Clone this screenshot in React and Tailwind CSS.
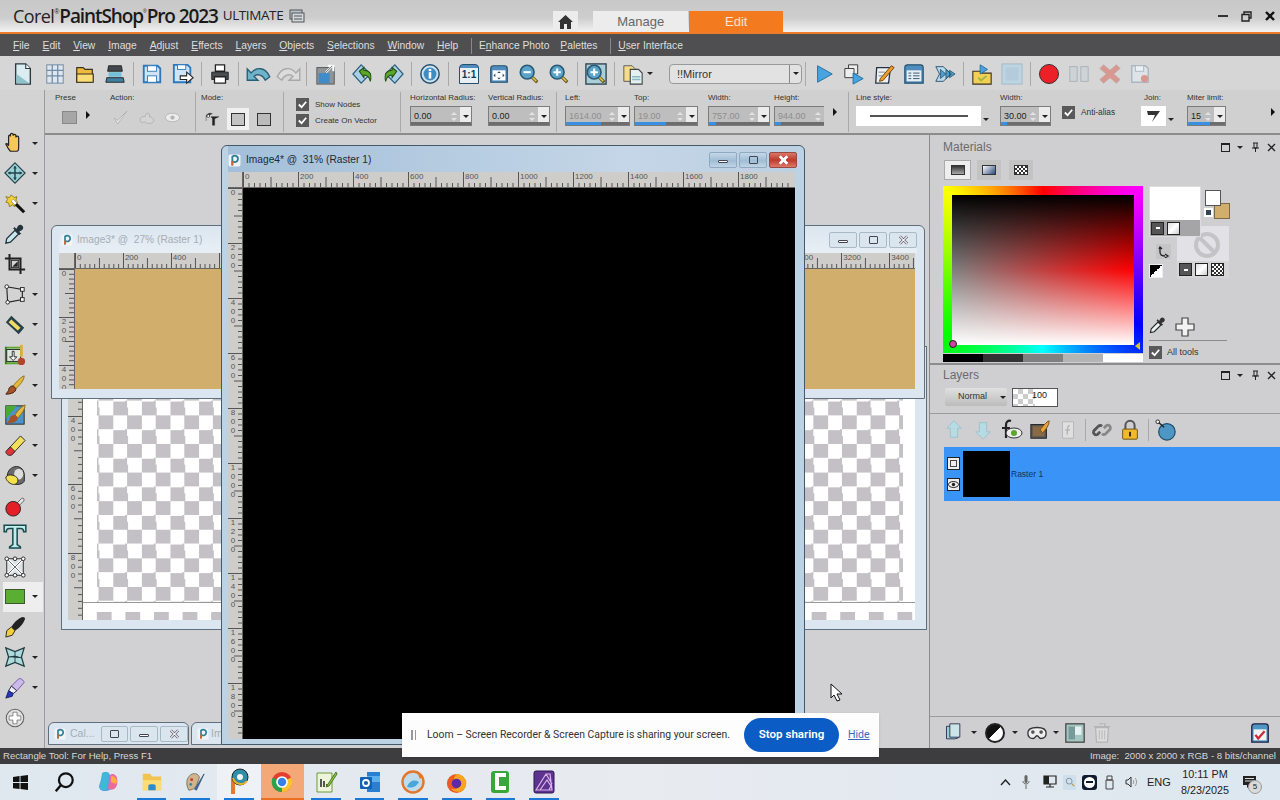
import React from "react";

const S = ({ s = 22, children, className = "" }) => (
  <svg width={s} height={s} viewBox="0 0 24 24" className={"shrink-0 " + className}>
    {children}
  </svg>
);

const Caret = ({ className = "" }) => (
  <span className={"inline-block w-0 h-0 border-x-[3px] border-x-transparent border-t-[3px] border-t-[#222] " + className} />
);
const ArrowR = ({ className = "" }) => (
  <span className={"inline-block w-0 h-0 border-y-[4px] border-y-transparent border-l-[4px] border-l-[#111] " + className} />
);

// top toolbar icons
const NewDoc = () => <S><path d="M4 1h11l5 5v17H4z" fill="#dcedf1" stroke="#2a3a40" strokeWidth="1.5" /><path d="M5 22V12l14 10z" fill="#8fc3cc" /><path d="M15 1v5h5" fill="#fff" stroke="#2a3a40" strokeWidth="1.2" /></S>;
const GridIco = () => <S><rect x="3" y="2" width="18" height="20" fill="#dfe6ee" stroke="#7d95ab" strokeWidth="1.2" /><path d="M9 2v20M15 2v20M3 8h18M3 14h18" stroke="#6f8ca8" strokeWidth="1.4" /></S>;
const FolderIco = () => <S><path d="M3 5h7l2 2h8v14H3z" fill="#f1b93e" stroke="#3a3220" strokeWidth="1.3" /><path d="M3 12h18v9H3z" fill="#fbdc77" stroke="#3a3220" strokeWidth="1.3" /></S>;
const ScanIco = () => <S><path d="M5 3h14l1 6H4z" fill="#40484e" stroke="#222" /><rect x="5" y="10" width="14" height="5" fill="#73c0d8" /><path d="M3 16h18l1 5H2z" fill="#3f7fa0" stroke="#222" /></S>;
const SaveIco = () => <S><path d="M3 3h15l3 3v15H3z" fill="#cfe4f5" stroke="#2d78bd" strokeWidth="2" /><rect x="7" y="3" width="10" height="6" fill="#fff" stroke="#2d78bd" /><rect x="7" y="14" width="10" height="7" fill="#fff" stroke="#2d78bd" /></S>;
const SaveAsIco = () => <S><path d="M2 2h15l3 3v16H2z" fill="#cfe4f5" stroke="#2d78bd" strokeWidth="2" /><rect x="6" y="2" width="9" height="5" fill="#fff" stroke="#2d78bd" /><path d="M9 14h7v-4l7 6-7 6v-4H9z" fill="#fff" stroke="#222" strokeWidth="1.2" /></S>;
const PrintIco = () => <S><path d="M7 2h10v7H7z" fill="#fff" stroke="#222" strokeWidth="1.4" /><path d="M3 10h18v8H3z" fill="#4a4d50" stroke="#222" /><path d="M6 15h12v7H6z" fill="#fff" stroke="#222" strokeWidth="1.4" /></S>;
const UndoIco = ({ off }) => (
  <S s={27}><g transform={off ? "matrix(-1 0 0 1 24 0)" : ""}><path d="M2 18V8l3.500 3.500C10 6 18 6 22 15l-4 3c-2-5-7-6-10-3.500l3.500 3.500z" fill={off ? "#dcdcdc" : "#6fb3c9"} stroke={off ? "#a8a8a8" : "#2a6077"} strokeWidth="1.2" /></g></S>
);
const ResizeIco = () => <S><rect x="2" y="5" width="19" height="18" fill="#8f9497" stroke="#555" /><rect x="4" y="11" width="12" height="11" fill="#3f8cc8" /><path d="M12 10l7-7M14 3h6v6" stroke="#fff" strokeWidth="2.2" fill="none" /><path d="M12 10l7-7" stroke="#333" strokeWidth=".8" /></S>;
const HistIco = ({ flip }) => (
  <S><g transform={flip ? "matrix(-1 0 0 1 24 0)" : ""}><path d="M10 2l10 10-10 10L1 12z" fill="#a9cfe6" stroke="#2b5d7c" strokeWidth="1.3" /><path d="M8 9l5-4v3c6 0 9 4 7 12-1-5-3-7-7-7v3z" fill="#5aa72c" stroke="#234d10" strokeWidth="1.1" /></g></S>
);
const InfoIco = () => <S><circle cx="12" cy="12" r="10" fill="#cde3f2" stroke="#24506e" strokeWidth="1.6" /><circle cx="12" cy="12" r="7" fill="#3e8cc2" /><rect x="10.6" y="10" width="2.8" height="7" fill="#fff" /><rect x="10.6" y="6.5" width="2.8" height="2.4" fill="#fff" /></S>;
const OneOne = () => <div className="flex h-[20px] w-[20px] flex-col rounded-t-[4px] border-[1.5px] border-[#24506e] bg-[#4e8dbd] pt-[3px]"><span className="flex-1 bg-[#e8f0f5] text-center text-[10px] leading-[14px] font-bold text-[#123a55]">1:1</span></div>;
const FitIco = () => <S><path d="M3 6q0-3 3-3h12q3 0 3 3v15H3z" fill="#4e8dbd" stroke="#24506e" strokeWidth="1.3" /><rect x="5" y="8" width="14" height="11" fill="#fff" /><path d="M12 9l2 2h-4zM12 18l2-2h-4zM6 13.500l2-2v4zM18 13.500l-2-2v4z" fill="#24506e" /></S>;
const ZoomIco = ({ plus, frame }) => (
  <S>
    {frame && <rect x="1" y="1" width="22" height="22" fill="#a9cfd9" stroke="#31444f" strokeWidth="1.5" />}
    <path d="M14 14l7 7" stroke="#6b5a1a" strokeWidth="3.5" /><path d="M15 15l5 5" stroke="#e5c852" strokeWidth="1.6" />
    <circle cx="10" cy="10" r="7.5" fill="#5ba3c9" stroke="#2a5a75" strokeWidth="1.8" />
    <path d={plus ? "M6 10h8M10 6v8" : "M6 10h8"} stroke="#fff" strokeWidth="2.2" />
  </S>
);
const DocsIco = () => <S><path d="M2 3h9l3 3v14H2z" fill="#f3dc8a" stroke="#555" /><path d="M9 7h9l4 4v12H9z" fill="#e4f0f2" stroke="#444" strokeWidth="1.2" /><path d="M11 15h9M11 18h9" stroke="#89b9c4" strokeWidth="1.4" /></S>;
const PlayIco = () => <S><path d="M5 3l16 9-16 9z" fill="#4aa3de" stroke="#1f6da3" /></S>;
const ScriptsIco = () => <S><path d="M6 2h10v10H6z" fill="#eee" stroke="#333" /><path d="M2 6h10v10H2z" fill="#eee" stroke="#333" /><path d="M11 11l11 6-11 6z" fill="#4aa3de" stroke="#1f6da3" /></S>;
const EditScript = () => <S><path d="M4 5h15l-2 17H3z" fill="#eef1ef" stroke="#234" strokeWidth="1.4" /><path d="M8 17L20 3l3 2-12 14-4 1z" fill="#ef9d2f" stroke="#6a3d0a" /><path d="M6 10h7M6 14h5" stroke="#789" /></S>;
const FormIco = () => <S><path d="M2 5q0-3 3-3h14q3 0 3 3v17H2z" fill="#4e8dbd" stroke="#24506e" strokeWidth="1.3" /><rect x="4" y="8" width="16" height="12" fill="#e8eef2" /><path d="M6 11h3M11 11h7M6 14h3M11 14h7M6 17h3M11 17h7" stroke="#24506e" /></S>;
const BatchIco = () => <S><path d="M2 4h8l9 8-9 8H2l4-8z" fill="#bcdcee" stroke="#25506c" /><path d="M7 7l6 5-6 5zM13 7l6 5-6 5zM17 8l6 4-6 4z" fill="#4e9acb" stroke="#1d4a66" strokeWidth=".8" /></S>;
const FolderRun = () => <S><path d="M2 9h8l2 2h10v12H2z" fill="#f4cf57" stroke="#3a3220" strokeWidth="1.2" /><path d="M10 2l8 5-8 5z" fill="#4aa3de" stroke="#1f6da3" /><path d="M8 16l3 3 6-5" stroke="#9eb83b" strokeWidth="2" fill="none" /></S>;
const FadedSq = () => <S><rect x="1" y="1" width="22" height="22" fill="#bdd4e2" stroke="#a5b8c4" /><rect x="5" y="5" width="14" height="14" fill="#b4cbdb" /></S>;
const RecIco = () => <span className="h-[20px] w-[20px] rounded-full border border-[#333] bg-[#ec2027]" />;
const PauseIco = () => <S><rect x="2" y="4" width="8" height="16" fill="#cdd3d6" stroke="#a8b0b5" /><rect x="14" y="4" width="8" height="16" fill="#cdd3d6" stroke="#a8b0b5" /></S>;
const XIco = () => <S><path d="M5 2l7 6 7-6 4 4-7 6 7 6-4 4-7-6-7 6-4-4 7-6-7-6z" fill="#d89890" stroke="#c2a8a6" /></S>;
const SaveOff = () => <S><path d="M3 3h15l3 3v15H3z" fill="#dde3e7" stroke="#a9b6c0" strokeWidth="1.5" /><rect x="7" y="3" width="9" height="6" fill="#eef1f3" stroke="#a9b6c0" /><circle cx="17" cy="17" r="4" fill="#d89890" /></S>;

// toolbox icons
const tools = [
  [<S><path d="M7 21c-3-3-4-6-5-8 1-1 2 0 3 2V5c0-2 2-2 2 0V3c0-2 3-2 3 0v1c0-2 3-2 3 0v2c0-2 3-2 3 0v10c0 3-1 5-2 5z" fill="#f6c75b" stroke="#222" strokeWidth="1.3" /></S>, true],
  [<S><path d="M12 1l11 11-11 11L1 12z" fill="#9dd0d3" stroke="#23444e" strokeWidth="1.3" /><path d="M12 5v14M5 12h14" stroke="#23444e" strokeWidth="1.6" /><path d="M12 4l2 3h-4zM12 20l2-3h-4zM4 12l3-2v4zM20 12l-3-2v4z" fill="#23444e" /></S>, true],
  [<S><path d="M2 4l4 1 2-3 3 3 3-1-1 4 2 2-3 2v3l-3-2-3 2-1-4-3-1 2-3z" fill="#f0cf3a" stroke="#8e7b1a" /><path d="M9 8l13 13" stroke="#111" strokeWidth="3.4" /><path d="M9 8l4 4" stroke="#fff" strokeWidth="3" /></S>, true],
  [<S><path d="M2 22l1-5 9-9 4 4-9 9z" fill="#c9e6ee" stroke="#22333c" strokeWidth="1.4" /><path d="M12 4c0 2 1 2 2 2 1-4 4-5 6-3s1 5-3 6c0 1 0 2 2 2l-2 2-7-7z" fill="#24323b" /></S>],
  [<S><path d="M6 1v17h17M1 6h17v17" fill="none" stroke="#222" strokeWidth="2.2" /><path d="M9 15l6-6v6z" fill="#222" /><rect x="8" y="8" width="8" height="8" fill="none" stroke="#222" /></S>],
  [<S><path d="M3 4l17 3v11L4 21z" fill="none" stroke="#222" strokeWidth="1.2" /><g fill="#fff" stroke="#222"><rect x="1" y="2" width="4" height="4" rx="2" /><rect x="18" y="5" width="4" height="4" /><rect x="18" y="16" width="4" height="4" /><rect x="2" y="19" width="4" height="4" rx="2" /></g></S>, true],
  [<S><path d="M8 2l14 13-6 7L2 9z" fill="#27404c" /><path d="M8 6l10 9-3 3L5 9z" fill="#f0dc63" /></S>, true],
  [<S><path d="M2 3h16v2H2zM2 20h16v2H2z" fill="#58a62e" /><path d="M2 3v19" stroke="#3a7d1a" strokeWidth="2" /><rect x="3" y="6" width="15" height="13" fill="#dce8df" stroke="#222" /><path d="M11 8v6h3l-4 4-4-4h3V8z" fill="#fff" stroke="#222" /><path d="M19 1v13" stroke="#d9b13a" strokeWidth="3" /><circle cx="19" cy="19" r="4" fill="#b0452a" /></S>, true],
  [<S><path d="M22 2c-3 1-8 6-12 11l3 3c4-4 9-9 9-14z" fill="#e6ba3a" stroke="#8e6a12" /><path d="M10 13c-4 0-5 3-5 5l-3 4c6 0 11-2 11-6z" fill="#a4532a" stroke="#3e1f0c" /></S>, true],
  [<S><rect x="2" y="2" width="20" height="20" fill="#4a93c9" stroke="#222" /><path d="M2 2h12L2 16z" fill="#49a935" /><path d="M23 1c-3 1-8 6-11 11l3 3c4-4 8-9 8-14z" fill="#e6ba3a" stroke="#8e6a12" /><path d="M12 12c-4 0-6 2-6 5l-3 4c6 0 12-1 12-6z" fill="#a4532a" /></S>, true],
  [<S><path d="M18 1l5 5L9 21l-5-5z" fill="#f3df5a" stroke="#222" /><path d="M7 13l5 5-4 4c-3 1-6-1-6-4z" fill="#e0343c" stroke="#222" /></S>, true],
  [<S><path d="M4 14C2 6 10 0 16 2c6 2 7 8 6 16-3 4-12 6-18-4z" fill="#6a6a6a" stroke="#222" /><ellipse cx="16" cy="10" rx="5" ry="6" fill="#ddd" /><path d="M2 13c3-4 11-2 13 2 1 4-2 7-6 6-3-1-7-4-7-8z" fill="#f3e04a" stroke="#222" /></S>, true],
  [<S><path d="M12 11l7-7c2-2 4 1 2 3l-7 7z" fill="#e5e5e5" stroke="#555" /><circle cx="10" cy="15" r="8" fill="#e32027" stroke="#222" /></S>],
  [<S s={26}><path d="M2 2h20v6h-2c0-2-1-3-3-3h-3v15l3 2v1H7v-1l3-2V5H7C5 5 4 6 4 8H2z" fill="#bfeee8" stroke="#174b50" strokeWidth="1.4" /></S>],
  [<S><rect x="3" y="3" width="18" height="18" fill="#dde3e3" stroke="#222" /><path d="M3 3l18 18M21 3L3 21" stroke="#fff" strokeWidth="3" /><path d="M3 3l18 18M21 3L3 21" stroke="#333" strokeWidth=".8" fill="none" /><g fill="#fff" stroke="#222"><circle cx="3" cy="3" r="2" /><circle cx="21" cy="3" r="2" /><circle cx="3" cy="21" r="2" /><circle cx="21" cy="21" r="2" /><circle cx="12" cy="3" r="2" /><circle cx="12" cy="21" r="2" /></g></S>],
  [<span className="h-[15px] w-[20px] border border-[#3a5a2a] bg-[#5aaf32]" />, true, false, true],
  [<S><path d="M20 1c2 0 3 1 3 2-2 6-7 11-11 13l-4-4C10 8 15 3 20 1z" fill="#222" /><path d="M8 12l4 4-3 5-7 2 1-7z" fill="#f0cf3a" stroke="#222" /></S>],
  [<S><path d="M2 2l10 4 10-4-3 10 3 10-10-4-10 4 3-10z" fill="#aedadc" stroke="#1e3e44" strokeWidth="1.4" /><path d="M12 6v12M5 12l7-1 7 2" stroke="#1e3e44" /></S>, true],
  [<S><path d="M16 2c2-1 5 1 6 4l-8 9-6-5z" fill="#cbb9ea" stroke="#6b57a0" /><path d="M8 10l6 5-4 3-5-3z" fill="#f0f0ff" stroke="#223" /><path d="M5 15l5 3-1 3-7 2z" fill="#2a37b6" stroke="#16206e" /></S>, true],
  [<S s={20}><circle cx="12" cy="12" r="10.500" fill="#e3e3e3" stroke="#666" strokeWidth="1.3" /><path d="M12 5v14M5 12h14" stroke="#fff" strokeWidth="4" /><path d="M9.500 5h5v4.500H19v5h-4.500V19h-5v-4.500H5v-5h4.500z" fill="none" stroke="#777" /></S>],
];

const Sep = ({ className = "h-[24px] mx-[3px]" }) => <span className={"w-px shrink-0 bg-[#a9a9a9] " + className} />;
const Tb = ({ children }) => <div className="flex h-[30px] w-[30px] shrink-0 items-center justify-center">{children}</div>;
const Lb = ({ children }) => <div className="flex h-[30px] w-[28.5px] shrink-0 items-center justify-center">{children}</div>;

const menu = ["File", "Edit", "View", "Image", "Adjust", "Effects", "Layers", "Objects", "Selections", "Window", "Help"];

const Spin = ({ v, w, dim, bar = 0, cut }) => (
  <div className={"relative flex h-[20px] border border-[#7c7c7c] bg-[#bebebe] " + w + (cut ? " border-r-0" : "")}>
    <span className={"flex-1 pl-[3px] pt-[3px] text-[9px] leading-[12px] " + (dim ? "text-[#8e8e8e]" : "text-[#222]")}>{v}</span>
    <span className="flex w-[12px] flex-col items-center justify-center gap-[3px]">
      <span className="h-0 w-0 border-x-[3px] border-b-[3px] border-x-transparent border-b-[#e3e3e3]" />
      <span className="h-0 w-0 border-x-[3px] border-t-[3px] border-x-transparent border-t-[#e3e3e3]" />
    </span>
    {!cut && (
      <span className="flex w-[11px] items-center justify-center bg-[#ececec]">
        <Caret />
      </span>
    )}
    <span className="absolute bottom-0 left-0 right-0 h-[3px] bg-[#6d6d6d]">
      <span className="block h-full bg-[#3a90e0]" style={{ width: bar + "%" }} />
    </span>
  </div>
);

const Field = ({ label, ml, children }) => (
  <div className={"flex shrink-0 flex-col " + ml}>
    <span className="h-[16px] text-[8px] leading-[16px] text-[#333]">{label}</span>
    {children}
  </div>
);

const Check = ({ className = "" }) => (
  <span className={"flex h-[13px] w-[13px] shrink-0 items-center justify-center bg-[#595959] " + className}>
    <svg width="11" height="11" viewBox="0 0 12 12"><path d="M2 6l3 3 5-6" fill="none" stroke="#fff" strokeWidth="2" /></svg>
  </span>
);

const HRuler = ({ labels, cell, w }) => (
  <div className={"flex h-[16px] shrink-0 overflow-hidden border-b border-[#666] bg-[#cfcdca] " + w}>
    {labels.map((l) => (
      <div key={l} className="relative h-full shrink-0" style={{ width: cell }}>
        <span className="absolute left-[2px] top-0 text-[8px] leading-[10px] text-[#555]">{l}</span>
        <svg width={cell} height="15" className="absolute left-0 top-0">
          {Array.from({ length: 10 }).map((_, i) => (
            <line key={i} x1={(i * cell) / 10 + 0.5} x2={(i * cell) / 10 + 0.5} y1={i === 0 ? 0 : i === 5 ? 5 : 11} y2="15" stroke="#555" />
          ))}
        </svg>
      </div>
    ))}
  </div>
);

const VRuler = ({ labels, cell, w = "w-[15px]" }) => (
  <div className={"flex shrink-0 flex-col overflow-hidden border-r border-[#666] bg-[#cfcdca] " + w}>
    {labels.map((l) => (
      <div key={l} className="relative w-full shrink-0" style={{ height: cell }}>
        <span className="absolute left-[2px] top-0 flex w-[6px] flex-col text-center text-[8px] leading-[9px] text-[#555]">
          {String(l).split("").map((d, i) => <span key={i}>{d}</span>)}
        </span>
        <svg width="15" height={cell} className="absolute left-0 top-0">
          {Array.from({ length: 10 }).map((_, i) => (
            <line key={i} y1={(i * cell) / 10 + 0.5} y2={(i * cell) / 10 + 0.5} x1={i === 0 ? 0 : i === 5 ? 6 : 10} x2="15" stroke="#555" />
          ))}
        </svg>
      </div>
    ))}
  </div>
);

const PspLogo = ({ s = 13 }) => (
  <S s={s}><rect x="1" y="1" width="22" height="22" rx="3" fill="#f1f4f6" /><path d="M8 21V5c5-4 12-1 10 6-1 4-6 5-9 3" fill="none" stroke="#2f7f96" strokeWidth="3.4" /><path d="M8 21v-8" stroke="#d8642a" strokeWidth="3.4" /></S>
);

const WinBtn = ({ kind, active, red }) => (
  <span className={"flex h-[16px] w-[28px] items-center justify-center rounded-[2px] border " + (red ? "border-[#9a4a40] bg-[linear-gradient(#d8776a,#c0392b_50%,#dc7a6c)]" : active ? "border-[#8fa9c0] bg-[linear-gradient(#c5d8e8,#9fbdd5_55%,#c0d5e5)]" : "border-[#aab9c6] bg-[#dbe5ee]")}>
    {kind === "min" && <span className="mt-[3px] h-[3px] w-[10px] rounded-[1px] border border-[#445] bg-white" />}
    {kind === "max" && <span className="h-[8px] w-[9px] rounded-[1px] border-[1.5px] border-[#445]" />}
    {kind === "x" && (
      <svg width="11" height="10" viewBox="0 0 12 10"><path d="M2 1l8 8M10 1L2 9" stroke={red ? "#fff" : "#556"} strokeWidth="2.6" /><path d="M2 1l8 8M10 1L2 9" stroke="#fff" strokeWidth={red ? 2.6 : 1.2} /></svg>
    )}
  </span>
);

const PanelHead = ({ title }) => (
  <div className="flex h-[20px] items-center pl-[13px] pr-[4px]">
    <span className="flex-1 text-[12px] text-[#6b6b6b]">{title}</span>
    <span className="mr-[7px] h-[9px] w-[9px] border border-t-2 border-[#222]" />
    <Caret className="mr-[8px]" />
    <svg width="9" height="10" viewBox="0 0 9 10" className="mr-[7px]"><path d="M2 1h5M3 1v5h3V1M1 6h7M4.500 6v4" stroke="#222" fill="none" /></svg>
    <svg width="9" height="9" viewBox="0 0 9 9"><path d="M1 1l7 7M8 1L1 8" stroke="#222" strokeWidth="1.3" /></svg>
  </div>
);

const swatchTool = "flex h-[13px] w-[13px] items-center justify-center border border-[#222]";

export default function App() {
  return (
    <div className="relative flex h-[800px] w-[1280px] flex-col overflow-hidden bg-[#cfcfd1] font-['Liberation_Sans',Arial,sans-serif]">
      {/* title bar */}
      <div className="flex h-[32px] items-center bg-[linear-gradient(#c8c8c8,#cdcdcd_55%,#f2f2f2)] pl-[13px]">
        <span className="font-['Open_Sans',sans-serif] text-[18px] leading-none tracking-[-0.6px] text-[#222]">Corel</span>
        <span className="-mt-[8px] text-[7px] text-[#222]">®</span>
        <span className="font-['Open_Sans',sans-serif] text-[19px] font-semibold leading-none tracking-[-1.1px] text-[#1a1a1a]">PaintShop</span>
        <span className="-mt-[9px] text-[5px] text-[#222]">®</span>
        <span className="font-['Open_Sans',sans-serif] text-[19px] font-semibold leading-none tracking-[-1.1px] text-[#1a1a1a]">Pro 2023</span>
        <span className="ml-[5px] font-['Open_Sans',sans-serif] text-[13.5px] leading-none tracking-[-0.4px] text-[#222]">ULTIMATE</span>
        <svg width="16" height="14" viewBox="0 0 16 14" className="ml-[6px]"><rect x="1" y="1" width="12" height="9" fill="#b5c2c8" stroke="#555" /><rect x="3" y="4" width="12" height="9" fill="#cfd8dc" stroke="#555" /><path d="M5 7h8M5 10h8" stroke="#555" /></svg>
        <div className="ml-[248px] flex h-full items-end">
          <span className="flex h-[21px] w-[25px] items-center justify-center bg-[#ececec]">
            <svg width="15" height="14" viewBox="0 0 15 14"><path d="M7.500 0L15 7h-2v7H9V9H6v5H2V7H0z" fill="#333" /></svg>
          </span>
          <span className="ml-[15px] flex h-[21px] w-[95px] items-center justify-center bg-[#ececec] text-[13px] text-[#666]">Manage</span>
          <span className="ml-[1px] flex h-[21px] w-[94px] items-center justify-center bg-[#f47a20] text-[13px] text-[#f8e3d2]">Edit</span>
        </div>
        <div className="ml-auto flex items-center gap-[13px] pr-[5px]">
          <span className="h-[2px] w-[10px] bg-[#333]" />
          <svg width="11" height="11" viewBox="0 0 11 11"><path d="M3 3V1h7v6H8M1 3.500h7v6.500H1z" fill="none" stroke="#222" strokeWidth="1.4" /></svg>
          <svg width="10" height="10" viewBox="0 0 10 10"><path d="M1 1l8 8M9 1L1 9" stroke="#111" strokeWidth="2.4" /></svg>
        </div>
      </div>
      <div className="h-[2px] bg-[#ee7a2b]" />

      {/* menu bar */}
      <div className="flex h-[22px] items-center gap-[12.9px] bg-[#4f4f51] pl-[13px] pt-[1px] text-[10.3px] text-[#dedede]">
        {menu.map((m) => (
          <span key={m}><span className="underline">{m[0]}</span>{m.slice(1)}</span>
        ))}
        <span className="-mr-[6px] h-[16px] w-px bg-[#8a8a8a]" />
        <span className="-mr-[2px]">E<span className="underline">n</span>hance Photo</span>
        <span><span className="underline">P</span>alettes</span>
        <span className="-mr-[6px] h-[16px] w-px bg-[#8a8a8a]" />
        <span><span className="underline">U</span>ser Interface</span>
      </div>

      {/* main toolbar */}
      <div className="flex h-[34px] items-center bg-[#d6d6d6] pl-[8px] pt-[1px]">
        <Tb><NewDoc /></Tb><div className="w-[2px]" /><Tb><GridIco /></Tb><Tb><FolderIco /></Tb><Tb><ScanIco /></Tb>
        <Sep /><Tb><SaveIco /></Tb><div className="w-px" /><Tb><SaveAsIco /></Tb>
        <Sep /><Tb><PrintIco /></Tb>
        <Sep /><div className="w-px" /><Tb><UndoIco /></Tb><Tb><UndoIco off /></Tb>
        <Sep /><div className="w-px" /><Tb><ResizeIco /></Tb>
        <Sep /><Tb><HistIco /></Tb><Tb><HistIco flip /></Tb>
        <Sep /><Tb><InfoIco /></Tb>
        <Sep /><div className="w-[2px]" /><Tb><OneOne /></Tb><Tb><FitIco /></Tb><Tb><ZoomIco /></Tb><Tb><ZoomIco plus /></Tb>
        <Sep /><Tb><ZoomIco plus frame /></Tb>
        <Sep /><Tb><DocsIco /></Tb>
        <Caret className="-ml-[1px] mr-[16px]" />
        <div className="flex h-[20px] w-[133px] rounded-[4px] border border-[#999] bg-[#e2e2e2]">
          <span className="flex-1 pl-[7px] text-[11px] leading-[18px] text-[#333]">!!Mirror</span>
          <span className="flex w-[12px] items-center justify-center border-l border-[#888]"><Caret /></span>
        </div>
        <Sep className="ml-[3px] mr-[3px] h-[24px]" />
        <Tb><PlayIco /></Tb><Tb><ScriptsIco /></Tb><Tb><EditScript /></Tb><Tb><FormIco /></Tb><div className="w-px" /><Tb><BatchIco /></Tb>
        <Sep /><Tb><FolderRun /></Tb><Tb><FadedSq /></Tb>
        <Sep /><Tb><RecIco /></Tb><Tb><PauseIco /></Tb><div className="w-px" /><Tb><XIco /></Tb><Tb><SaveOff /></Tb>
      </div>

      {/* body */}
      <div className="flex h-[658px]">
        {/* toolbox */}
        <div className="flex w-[45px] shrink-0 flex-col border-r border-[#9c9c9c] bg-[#d3d3d3] pl-[3px] pt-[38px]">
          {tools.map(([icon, caret, , sel], i) => (
            <div key={i} className={"flex h-[30.25px] w-[40px] shrink-0 items-center " + (sel ? "bg-[#eeeeee]" : "")}>
              <span className="flex w-[24px] justify-center">{icon}</span>
              {caret && <Caret className="ml-[5px]" />}
            </div>
          ))}
        </div>

        <div className="flex min-w-0 flex-1 flex-col">
          {/* tool options */}
          <div className="flex h-[45px] shrink-0 items-start border-b-2 border-[#8c8c8c] bg-[#d0d0d0]">
            <Field label="Prese" ml="ml-[10px] w-[55px]">
              <div className="ml-[7px] mt-[5px] flex items-start gap-[9px]"><span className="h-[13px] w-[15px] border border-[#888] bg-[#a6a6a6]" /><ArrowR /></div>
            </Field>
            <Field label="Action:" ml="w-[85px]">
              <div className="mt-[3px] flex items-center gap-[9px] pl-[2px]">
                <S s={17}><path d="M3 13l5 8L21 3 8 16z" fill="#e4e4e4" stroke="#a8a8a8" /></S>
                <S s={17}><path d="M3 16c0-5 5-6 7-5 0-3 2-6 5-5 2 1 1 4 1 5 3 0 6 2 6 5s-3 5-6 4c-3 1-5 0-6-2-3 2-7 1-7-2z" fill="#d4d4d4" stroke="#a8a8a8" /></S>
                <S s={17}><ellipse cx="12" cy="12" rx="10" ry="6" fill="#ececec" stroke="#a8a8a8" /><circle cx="12" cy="12" r="3" fill="#b5b5b5" /></S>
              </div>
            </Field>
            <Sep className="h-[40px] mt-[2px]" />
            <Field label="Mode:" ml="ml-[5px] w-[82px]">
              <div className="mt-[2px] flex items-center pl-[1px]">
                <span className="flex w-[21px] justify-center"><S s={17}><path d="M3 8c0-4 5-6 9-4M3 8v6M10 8h11l-6 3v9h-3v-9z" fill="#222" stroke="#222" strokeWidth=".6" /><circle cx="6" cy="7" r="2" fill="#fff" stroke="#222" /></S></span>
                <span className="ml-[4px] flex h-[22px] w-[22px] items-center justify-center bg-[#f0f0f0]"><span className="h-[13px] w-[14px] border border-[#333] bg-[#c4c4c4]" /></span>
                <span className="flex w-[30px] justify-center"><span className="h-[13px] w-[14px] border border-[#333] bg-[#bbb]" /></span>
              </div>
            </Field>
            <Sep className="h-[40px] mt-[2px]" />
            <div className="ml-[12px] flex w-[104px] shrink-0 flex-col gap-[3px] pt-[8px] text-[8px] text-[#333]">
              <span className="flex items-center gap-[6px]"><Check />Show Nodes</span>
              <span className="flex items-center gap-[6px]"><Check />Create On Vector</span>
            </div>
            <Sep className="h-[40px] mt-[2px]" />
            <Field label="Horizontal Radius:" ml="ml-[9px] w-[78px]"><Spin v="0.00" w="w-[62px]" /></Field>
            <Field label="Vertical Radius:" ml="w-[68px]"><Spin v="0.00" w="w-[62px]" /></Field>
            <Sep className="h-[40px] mt-[2px]" />
            <Field label="Left:" ml="ml-[8px] w-[69px]"><Spin v="1614.00" dim bar={55} w="w-[65px]" /></Field>
            <Field label="Top:" ml="w-[74px]"><Spin v="19.00" dim bar={50} w="w-[64px]" /></Field>
            <Field label="Width:" ml="w-[66px]"><Spin v="757.00" dim bar={12} w="w-[62px]" /></Field>
            <Field label="Height:" ml="w-[50px]"><Spin v="944.00" dim bar={12} w="w-[50px]" cut /></Field>
            <ArrowR className="ml-[9px] mt-[18px]" />
            <Sep className="ml-[11px] mr-[7px] mt-[2px] h-[40px]" />
            <Field label="Line style:" ml="w-[144px]">
              <div className="flex items-center">
                <span className="flex h-[20px] w-[125px] items-center justify-center bg-white"><span className="h-[2px] w-[98px] bg-[#555]" /></span>
                <Caret className="ml-[2px] mt-[7px]" />
              </div>
            </Field>
            <Field label="Width:" ml="w-[62px]"><Spin v="30.00" bar={12} w="w-[51px]" /></Field>
            <div className="flex w-[79px] shrink-0 items-center gap-[6px] pt-[16px] text-[8.3px] text-[#333]"><Check />Anti-alias</div>
            <Field label="Join:" ml="w-[46px] pl-[3px]">
              <div className="-ml-[3px] flex items-center">
                <span className="flex h-[20px] w-[25px] items-center justify-center bg-white"><svg width="14" height="13" viewBox="0 0 14 13"><path d="M0 1h13L5 12 8 5H1z" fill="#333" /></svg></span>
                <Caret className="ml-[2px] mt-[6px]" />
              </div>
            </Field>
            <Field label="Miter limit:" ml="w-[47px]"><Spin v="15" bar={60} w="w-[39px]" /></Field>
            <ArrowR className="ml-[37px] mt-[18px]" />
          </div>

          <div className="flex min-h-0 flex-1">
            {/* canvas area: document windows float here */}
            <div className="relative min-w-0 flex-1 overflow-hidden bg-[#d1d0d3]">
              {/* back window */}
              <div className="absolute left-[16px] top-[211px] flex h-[284px] w-[866px] flex-col border border-[#5f6f7c] bg-[#dbe6f0] pl-[6px] pr-[11px] pb-[9px]">
                <div className="flex min-h-0 flex-1">
                  <VRuler labels={[200, 400, 600, 800]} cell={68.5} />
                  <div className="flex min-w-0 flex-1 flex-col bg-white">
                    <div className="flex min-h-0 flex-1 border-b border-[#999]">
                      <div className="w-[14px] shrink-0 bg-white" />
                      <div className="flex-1 bg-[conic-gradient(#c3c1c5_25%,#fff_0_50%,#c3c1c5_0_75%,#fff_0)] bg-[length:28.6px_28.6px] bg-[position:-12.3px_11.2px]" />
                      <div className="w-[12px] shrink-0 bg-white" />
                    </div>
                    <div className="h-[9px] shrink-0 bg-white" />
                    <div className="h-[8px] shrink-0 bg-[conic-gradient(#c3c1c5_25%,#fff_0_50%,#c3c1c5_0_75%,#fff_0)] bg-[length:28.6px_28.6px]" />
                  </div>
                </div>
              </div>
              {/* Image3 */}
              <div className="absolute left-[6px] top-[90px] flex h-[174px] w-[874px] flex-col rounded-t-[6px] border border-[#5f6f7c] bg-[#dbe6f0] pl-[7px] pr-[9px] pb-[9px]">
                <div className="-mr-[2px] flex h-[27px] shrink-0 items-center gap-[4px] bg-[linear-gradient(#dbe6f0,#e8eff6)] pl-[2px] pt-[1px]">
                  <PspLogo s={12} />
                  <span className="text-[10.2px] text-[#a6adb5]">Image3* @&nbsp; 27% (Raster 1)</span>
                  <span className="ml-auto flex gap-[2px]"><WinBtn kind="min" /><WinBtn kind="max" /><WinBtn kind="x" /></span>
                </div>
                <div className="flex shrink-0">
                  <div className="h-[16px] w-[16px] shrink-0 border-b border-r border-[#666] bg-[#cfcdca]" />
                  <HRuler w="flex-1 min-w-0" cell={47.9} labels={[0, 200, 400, 600, 800, 1000, 1200, 1400, 1600, 1800, 2000, 2200, 2400, 2600, 2800, 3000, 3200, 3400]} />
                </div>
                <div className="flex min-h-0 flex-1">
                  <VRuler w="w-[16px]" labels={[0, 200, 400]} cell={48} />
                  <div className="flex-1 bg-[#d2ae6d]" />
                </div>
              </div>
              {/* minimized docs */}
              <div className="absolute left-[3px] top-[587px] flex h-[23px] w-[141px] items-center gap-[2px] rounded-t-[6px] border border-[#5f6f7c] bg-[#dbe6f0] pl-[5px]">
                <PspLogo s={12} />
                <span className="ml-[2px] w-[29px] text-[10.5px] text-[#a6adb5]">Cal...</span>
                <WinBtn kind="max" /><WinBtn kind="min" /><WinBtn kind="x" />
              </div>
              <div className="absolute left-[146px] top-[587px] flex h-[23px] w-[60px] items-center gap-[2px] rounded-t-[6px] border border-[#5f6f7c] bg-[#dbe6f0] pl-[5px]">
                <PspLogo s={12} />
                <span className="text-[10.5px] text-[#a6adb5]">Im</span>
              </div>
              {/* Image4 */}
              <div className="absolute left-[176px] top-[10px] flex h-[600px] w-[584px] flex-col rounded-t-[6px] border border-[#44596a] bg-[#bcd3e6] pb-[5px] pl-[6px] pr-[9px]">
                <div className="-mr-[2px] flex h-[26px] shrink-0 items-center gap-[5px] bg-[linear-gradient(90deg,#a3bfd9,#c4d6e7_70%,#bcd0e2)] pt-[2px]">
                  <PspLogo s={13} />
                  <span className="text-[10.2px] text-[#1e2a33]">Image4* @&nbsp; 31% (Raster 1)</span>
                  <span className="ml-auto flex gap-[2px]"><WinBtn kind="min" active /><WinBtn kind="max" active /><WinBtn kind="x" red /></span>
                </div>
                <div className="flex shrink-0">
                  <div className="h-[16px] w-[15px] shrink-0 border-b border-r border-[#666] bg-[#cfcdca]" />
                  <HRuler w="flex-1 min-w-0" cell={55} labels={[0, 200, 400, 600, 800, 1000, 1200, 1400, 1600, 1800]} />
                </div>
                <div className="flex min-h-0 flex-1">
                  <VRuler labels={[0, 200, 400, 600, 800, 1000, 1200, 1400, 1600, 1800]} cell={55} />
                  <div className="flex-1 bg-black" />
                </div>
              </div>
              <svg width="14" height="19" viewBox="0 0 14 19" className="absolute left-[785px] top-[548px]"><path d="M1 1v14l3-3 3 6 3-1-3-6h5z" fill="#fff" stroke="#111" /></svg>
            </div>

            {/* right palettes */}
            <div className="flex w-[351px] shrink-0 flex-col border-l border-[#8c8c8c] bg-[#cfcfd1]">
              <div className="h-[230px] shrink-0 border-b-2 border-[#8c8c8c] pt-[2px]">
                <PanelHead title="Materials" />
                <div className="ml-[14px] mt-[3px] flex h-[20px] items-center gap-[6px]">
                  <span className="flex h-[20px] w-[27px] items-center justify-center border border-[#aaa] bg-[#eee]"><span className="h-[10px] w-[14px] border border-[#333] bg-[linear-gradient(#333,#aaa)]" /></span>
                  <span className="flex h-[20px] w-[24px] items-center justify-center bg-[#c3c3c3]"><span className="h-[10px] w-[14px] border border-[#333] bg-[linear-gradient(135deg,#fff,#2a4a80)]" /></span>
                  <span className="ml-[2px] flex h-[20px] w-[24px] items-center justify-center bg-[#c3c3c3]"><span className="h-[10px] w-[14px] border border-[#333] bg-[conic-gradient(#333_25%,#fff_0_50%,#333_0_75%,#fff_0)] bg-[length:4px_4px]" /></span>
                </div>
                <div className="ml-[13px] mt-[6px] flex">
                  <div className="flex w-[200px] shrink-0 flex-col">
                    <div className="relative h-[167px] bg-[conic-gradient(#f00_0deg,#f0f_50deg,#00f_120deg,#0ff_180deg,#0f0_235deg,#ff0_310deg,#f00_360deg)] p-[9px]">
                      <div className="h-[150px] w-[182px] bg-[linear-gradient(to_bottom,#000_0%,transparent_50%,#fff_100%),linear-gradient(to_right,#808080,#f00)]" />
                      <span className="absolute bottom-[5px] left-[6px] h-[8px] w-[8px] rounded-full border border-[#222] bg-[#d040a0]" />
                      <span className="absolute bottom-[3px] right-[3px] h-0 w-0 border-y-[4px] border-r-[5px] border-y-transparent border-r-[#d8c820]" />
                    </div>
                    <div className="mt-[1px] flex h-[8px]">
                      <span className="flex-1 bg-black" /><span className="flex-1 bg-[#333]" /><span className="flex-1 bg-[#808080]" /><span className="flex-1 bg-[#b4b4b4]" /><span className="flex-1 bg-white" />
                    </div>
                  </div>
                  <div className="relative ml-[6px] flex-1">
                    {/* material swatches overlap each other */}
                    <div className="absolute left-[28px] top-[40px] flex h-[52px] w-[52px] flex-col items-center bg-[#e2e2e6]">
                      <svg width="28" height="28" viewBox="0 0 28 28" className="ml-[8px] mt-[5px]"><circle cx="14" cy="14" r="11" fill="none" stroke="#c4c4c6" strokeWidth="4" /><path d="M6 6l16 16" stroke="#c4c4c6" strokeWidth="4" /></svg>
                      <div className="absolute bottom-0 left-0 right-0 flex h-[17px] items-center gap-[3px] bg-[#d5d5d8] pl-[2px]">
                        <span className={swatchTool + " bg-[#555]"}><span className="h-[2px] w-[4px] bg-white" /></span>
                        <span className={swatchTool + " bg-[linear-gradient(135deg,#ddd,#fff,#ccc)]"} />
                        <span className={swatchTool + " bg-[conic-gradient(#333_25%,#fff_0_50%,#333_0_75%,#fff_0)] bg-[length:4px_4px]"} />
                      </div>
                    </div>
                    <div className="absolute left-0 top-0 flex h-[51px] w-[52px] flex-col justify-end border border-[#ddd] bg-white">
                      <div className="flex h-[16px] items-center gap-[3px] bg-[#a5a5a8] pl-[1px]">
                        <span className={swatchTool + " bg-[#555]"}><span className="h-[2px] w-[4px] bg-white" /></span>
                        <span className={swatchTool + " bg-[linear-gradient(135deg,#ddd,#fff,#ccc)]"} />
                      </div>
                    </div>
                    <span className="absolute left-[65px] top-[17px] h-[16px] w-[16px] border border-[#7a6a45] bg-[#d2ae6d]" />
                    <span className="absolute left-[56px] top-[4px] h-[16px] w-[16px] border border-[#555] bg-white" />
                    <span className="absolute left-[55px] top-[22px] flex h-[9px] w-[9px] items-center justify-center bg-white"><span className="h-[5px] w-[5px] bg-[#345]" /></span>
                    <span className="absolute left-[7px] top-[58px] flex h-[15px] w-[15px] items-center justify-center bg-[#c5c5c7]">
                      <svg width="12" height="12" viewBox="0 0 12 12"><path d="M2 1v5c0 3 2 4 5 4M1 3l1-2 2 2M7 8l3 2-3 2" fill="none" stroke="#222" strokeWidth="1.3" /></svg>
                    </span>
                    <span className="absolute left-0 top-[78px] h-[14px] w-[14px] border border-[#eee] bg-[linear-gradient(135deg,#000_50%,#fff_50%)]" />
                    <svg width="18" height="18" viewBox="0 0 24 24" className="absolute left-0 top-[130px]"><path d="M2 22l1-5 9-9 4 4-9 9z" fill="#eef2f4" stroke="#222" strokeWidth="1.5" /><path d="M12 4c0 2 1 2 2 2 1-4 4-5 6-3s1 5-3 6c0 1 0 2 2 2l-2 2-7-7z" fill="#333" /></svg>
                    <svg width="20" height="20" viewBox="0 0 20 20" className="absolute left-[26px] top-[131px]"><path d="M7 1h6v6h6v6h-6v6H7v-6H1V7h6z" fill="#f2f2f2" stroke="#444" strokeWidth="1.2" /></svg>
                    <span className="absolute left-0 top-[154px] h-px w-[78px] bg-[#8c8c8c]" />
                    <span className="absolute left-0 top-[160px] flex items-center gap-[5px] text-[9px] leading-none text-[#333]"><Check />All tools</span>
                  </div>
                </div>
              </div>

              <div className="flex min-h-0 flex-1 flex-col">
                <PanelHead title="Layers" />
                <div className="flex h-[22px] items-center gap-[5px] pl-[15px] pt-[2px]">
                  <span className="flex h-[18px] w-[62px] items-center rounded-[2px] bg-[linear-gradient(#e0e0e0,#bcbcbc)] pl-[13px] text-[9px] text-[#333]">Normal<Caret className="ml-[13px]" /></span>
                  <span className="relative h-[19px] w-[46px] border border-[#555] bg-white">
                    <span className="absolute inset-y-0 left-0 w-[22px] bg-[conic-gradient(#ccc_25%,#fff_0_50%,#ccc_0_75%,#fff_0)] bg-[length:10px_10px]" />
                    <span className="absolute left-[19px] top-0 text-[9px] leading-[12px] text-[#222]">100</span>
                  </span>
                </div>
                <div className="mt-[6px] flex h-[33px] items-center border-t border-[#9c9c9c] pl-[10px]">
                  <Lb><S><path d="M12 2l8 8h-4v10H8V10H4z" fill="#b7dbe2" stroke="#9bc1ca" /></S></Lb>
                  <Lb><S><path d="M12 22l8-8h-4V4H8v10H4z" fill="#b7dbe2" stroke="#9bc1ca" /></S></Lb>
                  <Lb><S s={24}><path d="M7 20V7c0-3 2-5 5-4M3 10h8" fill="none" stroke="#222" strokeWidth="2.2" /><ellipse cx="15" cy="15" rx="8" ry="5" fill="#eee" stroke="#333" /><circle cx="15" cy="15" r="3" fill="#5aa72c" /></S></Lb>
                  <Lb><S><rect x="2" y="6" width="17" height="15" fill="#555" stroke="#222" /><rect x="4" y="8" width="13" height="11" fill="#8a6a45" /><path d="M22 2c-3 1-7 6-10 10l3 3c3-3 7-8 7-13z" fill="#e6a13a" stroke="#7a4a10" /></S></Lb>
                  <Lb><S><path d="M6 3h12v18H6z" fill="#dfdfe0" stroke="#b5b5b5" /><path d="M14 7c-3 0-2 3-3 10M9 12h5" stroke="#b5b5b5" strokeWidth="1.5" fill="none" /></S></Lb>
                  <Sep className="mx-[2px] h-[22px]" />
                  <Lb><S><g fill="none" strokeWidth="3"><path d="M10 14l-3 3a3 3 0 01-4-4l5-5a3 3 0 014 0" stroke="#555" /><path d="M14 10l3-3a3 3 0 014 4l-5 5a3 3 0 01-4 0" stroke="#888" /></g></S></Lb>
                  <Lb><S><path d="M7 11V7a5 5 0 0110 0v4" fill="none" stroke="#555" strokeWidth="2.2" /><rect x="4" y="11" width="16" height="11" rx="1" fill="#f0b92e" stroke="#6a4e0c" /><rect x="11" y="14" width="2" height="5" fill="#222" /></S></Lb>
                  <Sep className="mx-[3px] h-[22px]" />
                  <Lb><S><circle cx="13" cy="14" r="9" fill="#4e97c5" stroke="#1e4c6a" strokeWidth="1.3" /><path d="M3 3l7 6" stroke="#222" strokeWidth="1.6" /><circle cx="3" cy="3" r="2" fill="#f2f2f2" stroke="#222" /></S></Lb>
                </div>
                <div className="ml-[14px] mt-[1px] flex h-[54px] items-center bg-[#3a94f8]">
                  <div className="flex w-[18px] flex-col items-center gap-[8px]">
                    <span className="flex h-[13px] w-[13px] items-center justify-center border border-[#222] bg-[#eee]"><span className="h-[7px] w-[7px] border border-[#444]" /></span>
                    <span className="flex h-[13px] w-[13px] items-center justify-center border border-[#222] bg-[#eee]"><svg width="11" height="7" viewBox="0 0 11 7"><ellipse cx="5.500" cy="3.500" rx="5" ry="3" fill="none" stroke="#222" /><circle cx="5.500" cy="3.500" r="1.700" fill="#222" /></svg></span>
                  </div>
                  <div className="ml-[1px] h-[46px] w-[47px] bg-black" />
                  <span className="ml-[1px] text-[8.5px] text-[#12335c]">Raster 1</span>
                </div>
                <div className="mt-auto flex h-[32px] items-center border-t border-[#9c9c9c] pl-[14px]">
                  <S s={20}><path d="M3 4h10l4-1v15l-4 1H3z" fill="#98cfd6" stroke="#224" /><path d="M7 1h12v16H7z" fill="#cbe5e9" stroke="#224" /></S>
                  <Caret className="ml-[7px]" />
                  <span className="ml-[8px] h-[20px] w-[20px] rounded-full border-2 border-[#222] bg-[linear-gradient(135deg,#111_50%,#fff_50%)]" />
                  <Caret className="ml-[7px]" />
                  <S s={22} className="ml-[8px]"><path d="M2 12c0-5 4-6 10-6s10 1 10 6-3 6-6 6c-2 0-2-3-4-3s-2 3-4 3c-3 0-6-1-6-6z" fill="#eee" stroke="#333" strokeWidth="1.4" /><circle cx="7.500" cy="11" r="2" fill="#555" /><circle cx="16.500" cy="11" r="2" fill="#555" /></S>
                  <Caret className="ml-[5px]" />
                  <S s={22} className="ml-[5px]"><rect x="2" y="2" width="20" height="20" fill="#a5c7c2" stroke="#444" strokeWidth="1.4" /><rect x="12" y="5" width="7" height="9" fill="#e6f2f2" /><path d="M5 5h7v14H5z" fill="#799" /></S>
                  <S s={22} className="ml-[5px]"><path d="M5 6h14l-1 16H6zM3 5h18M9 2h6v3" fill="#ddd" stroke="#b4b4b4" strokeWidth="1.4" /><path d="M9 9v10M12 9v10M15 9v10" stroke="#b4b4b4" /></S>
                  <S s={22} className="ml-auto mr-[9px]"><path d="M3 5q0-3 3-3h12q3 0 3 3v17H3z" fill="#4e97c5" stroke="#224" strokeWidth="1.4" /><rect x="5" y="8" width="14" height="12" fill="#f2f2f2" /><path d="M7 14l3 4 7-8" fill="none" stroke="#c82838" strokeWidth="2.4" /></S>
                </div>
              </div>
            </div>
          </div>
        </div>
      </div>

      {/* status bar */}
      <div className="flex h-[16px] items-center justify-between bg-[#3d3d3f] pl-[3px] pr-[4px] pt-[1px] text-[9.6px] text-[#d6d6d6]">
        <span>Rectangle Tool: For Help, Press F1</span>
        <span>Image:&nbsp; 2000 x 2000 x RGB - 8 bits/channel</span>
      </div>

      {/* taskbar */}
      <div className="relative flex h-[36px] items-center bg-[linear-gradient(90deg,#dfe8ef,#e8ebf0_50%,#dce7ef)] pl-0">
        <div className="-ml-[1px]" />
        <TaskItem><svg width="15" height="15" viewBox="0 0 16 16" fill="#111"><path d="M0 2l7-1v6.500H0zM8 1l8-1v7.500H8zM0 8.500h7V15l-7-1zM8 8.500h8V16l-8-1z" /></svg></TaskItem>
        <TaskItem><svg width="22" height="22" viewBox="0 0 24 24"><circle cx="14" cy="10" r="7.500" fill="none" stroke="#111" strokeWidth="2.4" /><path d="M9 15l-6 7" stroke="#111" strokeWidth="2.6" /></svg></TaskItem>
        <TaskItem><svg width="24" height="24" viewBox="0 0 24 24"><path d="M7 3c3-2 6-1 7 2l3 10c-1 5-5 6-8 6-4 0-6-2-6-5z" fill="#5b9de8" /><path d="M6 3c3-2 6-1 7 1l-2 14c-1 3-5 3-7 1z" fill="#3fb8d8" /><path d="M14 5c2-2 6-1 7 3 1 5 0 9-3 11-2 1-5 1-6-1z" fill="#ec6a9c" /><path d="M15 6c3 0 5 2 6 5l-1 3-5-2z" fill="#f5b23e" /></svg></TaskItem>
        <TaskItem bar><svg width="22" height="22" viewBox="0 0 24 24"><path d="M2 3h8l2 3h10v15H2z" fill="#f2c44d" /><path d="M2 10h20v11H2z" fill="#fbdc77" /><path d="M8 21v-5c0-2 8-2 8 0v5" fill="#2f8bd0" /></svg></TaskItem>
        <TaskItem bar><svg width="23" height="23" viewBox="0 0 24 24"><path d="M5 20C1 13 3 5 9 3c5-1 7 2 7 4l-3 8c-1 3-5 5-8 5z" fill="#d2b48c" stroke="#776" /><circle cx="8" cy="9" r="1.500" fill="#c33" /><circle cx="7" cy="14" r="1.500" fill="#38a" /><path d="M21 3L13 20l-2-1z" fill="#4a6fb0" stroke="#246" strokeWidth=".7" /></svg></TaskItem>
        <TaskItem bar bg="bg-[#eef2f6]"><svg width="24" height="28" viewBox="0 0 24 28"><path d="M6 26V10" stroke="#e8772a" strokeWidth="4" /><circle cx="13" cy="9" r="8" fill="#2f8ea8" stroke="#222" /><circle cx="13" cy="9" r="3" fill="#f2f4f6" /><path d="M6 10a8 8 0 0014 3" fill="none" stroke="#e8b42a" strokeWidth="2" /></svg></TaskItem>
        <TaskItem bar bg="bg-[#f4a878]" orange><svg width="22" height="22" viewBox="0 0 24 24"><circle cx="12" cy="12" r="11" fill="#e53d30" /><path d="M12 12L22 7A11 11 0 0112 23z" fill="#f9c22e" /><path d="M12 12L12 23A11 11 0 012 7z" fill="#2ba24c" /><circle cx="12" cy="12" r="5.500" fill="#3a7fe8" stroke="#fff" strokeWidth="1.800" /></svg></TaskItem>
        <TaskItem bar><svg width="24" height="24" viewBox="0 0 24 24"><path d="M3 3h15v19H3z" fill="#edf4da" stroke="#6a9a3a" /><path d="M7 17V9M10 17v-6M13 17v-3" stroke="#222" strokeWidth="1.500" /><path d="M22 2L14 14l-2 3 3-1 8-12z" fill="#8fc63e" stroke="#4a7a1a" /></svg></TaskItem>
        <TaskItem bar><svg width="24" height="24" viewBox="0 0 24 24"><rect x="9" y="2" width="13" height="20" fill="#2a7fd0" /><rect x="9" y="6" width="13" height="6" fill="#5ab0ea" /><rect x="2" y="7" width="12" height="12" rx="1" fill="#0f62b4" /><circle cx="8" cy="13" r="3" fill="none" stroke="#fff" strokeWidth="1.800" /></svg></TaskItem>
        <TaskItem bar><svg width="24" height="24" viewBox="0 0 24 24"><circle cx="12" cy="12" r="10.500" fill="#bfdcec" stroke="#e4762a" strokeWidth="2.400" /><path d="M6 17c2-6 7-8 12-5-2 3-5 7-12 5z" fill="#4aa6d8" /><path d="M16 2l6 4-3 3z" fill="#e4762a" /></svg></TaskItem>
        <TaskItem bar><svg width="23" height="23" viewBox="0 0 24 24"><circle cx="12" cy="13" r="10" fill="#ec5a2a" /><path d="M12 3c4 0 8 3 10 7 1 4-1 10-5 11-3 1-9 1-11-3 3 2 8 1 9-3 1-3-3-6-6-4 0-3 1-6 3-8z" fill="#f7a51e" /><circle cx="12" cy="13" r="5" fill="#5a2aa8" /></svg></TaskItem>
        <TaskItem bar><svg width="24" height="26" viewBox="0 0 24 26"><rect x="3" y="2" width="18" height="22" rx="3" fill="#3aa53a" /><path d="M18 6H9v13h9" fill="none" stroke="#fff" strokeWidth="4" /></svg></TaskItem>
        <TaskItem bar><svg width="24" height="26" viewBox="0 0 24 26"><rect x="2" y="2" width="20" height="22" rx="2" fill="#5c3391" stroke="#2e1755" /><path d="M4 21L14 5h4l2 16zM8 21l7-10 4 6-2 4zM14 5l6 10" fill="none" stroke="#e0b4e8" strokeWidth="1.200" /></svg></TaskItem>

        <div className="ml-auto flex h-full items-center text-[#111]">
          <svg width="11" height="7" viewBox="0 0 11 7" className="mr-[11px]"><path d="M1 6l4.500-5L10 6" fill="none" stroke="#222" strokeWidth="1.400" /></svg>
          <svg width="8" height="14" viewBox="0 0 8 14" className="mr-[13px]"><rect x="2.500" y="0" width="3" height="8" rx="1.500" fill="#666" /><path d="M1 6c0 4 6 4 6 0M4 10v4" stroke="#666" fill="none" /></svg>
          <svg width="14" height="14" viewBox="0 0 14 14" className="mr-[6px]"><path d="M1 1h12v8H1zM3 12h8M7 9v3" fill="none" stroke="#222" strokeWidth="1.200" /><rect x="1" y="1" width="5" height="8" fill="#222" /></svg>
          <span className="mr-[6px] flex h-[15px] w-[13px] items-center justify-center bg-[#cfe0ec]"><svg width="10" height="10" viewBox="0 0 12 12"><circle cx="5" cy="5" r="3.500" fill="none" stroke="#789" /><path d="M8 8l3 3" stroke="#b89a3a" strokeWidth="1.500" /></svg></span>
          <span className="mr-[8px] flex h-[15px] w-[15px] items-center justify-center rounded-[3px] bg-[#0e1a2e]"><span className="flex h-[11px] w-[11px] items-center justify-center rounded-full bg-white"><span className="h-[2px] w-[7px] bg-[#0e1a2e]" /></span></span>
          <svg width="9" height="15" viewBox="0 0 9 15" className="mr-[11px]"><path d="M2 1h5v4H2zM1 5h7v9H1z" fill="none" stroke="#444" /></svg>
          <svg width="13" height="12" viewBox="0 0 13 12" className="mr-[9px]"><path d="M1 4h2l3-3v10L3 8H1z" fill="none" stroke="#333" /><path d="M8 4c1 1 1 3 0 4M10 2c2 2 2 6 0 8" fill="none" stroke="#999" /></svg>
          <span className="mr-[10px] w-[23px] text-[11px] leading-none text-[#222]">ENG</span>
          <span className="flex w-[50px] flex-col items-center text-[10.8px] leading-[16px] text-[#222]"><span>10:11 PM</span><span>8/23/2025</span></span>
          <span className="relative ml-[12px] mr-[23px] h-[14px] w-[15px]">
            <svg width="15" height="14" viewBox="0 0 15 14"><path d="M1 1h13v9H8l-3 3v-3H1z" fill="#222" /><path d="M3 3.500h9M3 6h9" stroke="#ddd" /></svg>
            <span className="absolute -bottom-[5px] left-[6px] flex h-[14px] w-[14px] items-center justify-center rounded-full border border-[#999] bg-[#dadada] text-[8px] text-[#222]">5</span>
          </span>
        </div>
      </div>

      {/* Loom overlay sits on top of the app */}
      <div className="absolute left-[402px] top-[713px] flex h-[44px] w-[477px] items-center bg-[#fdfdfd] pl-[9px] shadow-sm">
        <span className="mr-[11px] flex gap-[2px]"><span className="h-[10px] w-[1.500px] bg-[#999]" /><span className="h-[10px] w-[1.500px] bg-[#999]" /></span>
        <span className="w-[317px] shrink-0 whitespace-nowrap font-['Roboto',sans-serif] text-[10.4px] text-[#333]">Loom – Screen Recorder &amp; Screen Capture is sharing your screen.</span>
        <span className="flex h-[34px] w-[95px] shrink-0 items-center justify-center rounded-full bg-[#0b5cc5] font-['Roboto',sans-serif] text-[11.6px] font-semibold text-white">Stop sharing</span>
        <span className="ml-[9px] font-['Roboto',sans-serif] text-[10.5px] text-[#3a68bd] underline">Hide</span>
      </div>
    </div>
  );
}

function TaskItem({ children, bar, bg = "", orange }) {
  return (
    <div className={"relative flex h-full w-[43.6px] shrink-0 items-center justify-center " + bg}>
      {children}
      {bar && <span className={"absolute bottom-0 h-[2px] " + (orange ? "left-0 right-0 bg-[#ec6f1f]" : "left-[7px] right-[7px] bg-[#1a78d8]")} />}
    </div>
  );
}
